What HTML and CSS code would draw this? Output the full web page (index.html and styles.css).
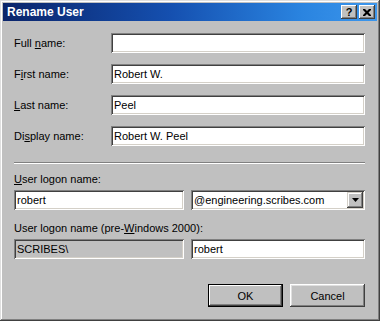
FILE: index.html
```html
<!DOCTYPE html>
<html lang="en">
<head>
  <meta charset="UTF-8" />
  <title>Rename User</title>
  <link rel="stylesheet" href="styles.css">
</head>
<body>

  <div class="window">
    <div class="titlebar">
      <span class="title">Rename User</span>
      <div class="caption-buttons">
        <div class="cap-btn help">?</div>
        <div class="cap-btn close">
          <svg width="8" height="7" viewBox="0 0 8 7">
            <path d="M0 0h2l2 2 2-2h2v1L5.5 3.5 8 6v1H6L4 5 2 7H0V6l2.5-2.5L0 1z" fill="#000"/>
          </svg>
        </div>
      </div>
    </div>

    <div class="body">
      <div class="fields">
        <label>Full <u>n</u>ame:</label>
        <div class="edit"></div>
        <label>F<u>i</u>rst name:</label>
        <div class="edit">Robert W.</div>
        <label><u>L</u>ast name:</label>
        <div class="edit">Peel</div>
        <label>Di<u>s</u>play name:</label>
        <div class="edit">Robert W. Peel</div>
      </div>

      <div class="separator"></div>

      <div class="caption first"><u>U</u>ser logon name:</div>
      <div class="pair">
        <div class="edit left">robert</div>
        <div class="edit combo">
          <span>@engineering.scribes.com</span>
          <div class="drop">
            <svg width="7" height="4" viewBox="0 0 7 4"><path d="M0 0h7L3.5 4z" fill="#000"/></svg>
          </div>
        </div>
      </div>

      <div class="caption second">User logon name (pre-<u>W</u>indows 2000):</div>
      <div class="pair">
        <div class="edit left disabled">SCRIBES\</div>
        <div class="edit right">robert</div>
      </div>

      <div class="buttons">
        <button class="btn default">OK</button>
        <button class="btn">Cancel</button>
      </div>
    </div>
  </div>

</body>
</html>
```

FILE: styles.css
```css
html, body {
  margin: 0;
  padding: 0;
  background: #c0c0c0;
  font-family: "Liberation Sans", Arial, sans-serif;
  font-size: 11px;
  color: #000;
}
.window {
  width: 380px;
  height: 321px;
  box-sizing: border-box;
  padding: 3px;
  background: #c0c0c0;
  box-shadow: inset -1px -1px #404040, inset 1px 1px #dfdfdf,
              inset -2px -2px #808080, inset 2px 2px #fff;
  display: flex;
  flex-direction: column;
}
.titlebar {
  height: 18px;
  display: flex;
  align-items: center;
  justify-content: space-between;
  padding: 0 2px 0 4px;
  background: linear-gradient(to right, #0a246a 0%, #1550b0 45%, #2a84e0 80%, #3c96ec 100%);
}
.title {
  color: #fff;
  font-weight: bold;
  font-size: 12px;
}
.caption-buttons {
  display: flex;
  gap: 2px;
}
.cap-btn {
  width: 16px;
  height: 14px;
  box-sizing: border-box;
  background: #c0c0c0;
  box-shadow: inset -1px -1px #404040, inset 1px 1px #fff,
              inset -2px -2px #808080;
  display: flex;
  align-items: center;
  justify-content: center;
}
.cap-btn.help {
  font-weight: bold;
  font-size: 11px;
  line-height: 14px;
}
.body {
  flex: 1;
  padding: 12px 12px 0 11px;
  display: flex;
  flex-direction: column;
}
.fields {
  display: grid;
  grid-template-columns: 97px 1fr;
  grid-auto-rows: 20px;
  row-gap: 11px;
  align-items: center;
}
.edit {
  height: 20px;
  box-sizing: border-box;
  background: #fff;
  padding: 0 3px;
  line-height: 20px;
  white-space: nowrap;
  box-shadow: inset 1px 1px #808080, inset -1px -1px #fff,
              inset 2px 2px #404040, inset -2px -2px #d4d0c8;
}
.separator {
  margin-top: 16px;
  height: 0;
  border-top: 1px solid #808080;
  border-bottom: 1px solid #fff;
}
.caption {
  line-height: 14px;
  margin-bottom: 4px;
}
.caption.first {
  margin-top: 8px;
}
.caption.second {
  margin-top: 11px;
}
.pair {
  display: flex;
  gap: 7px;
}
.pair .left {
  width: 170px;
}
.pair .combo,
.pair .right {
  flex: 1;
}
.combo {
  display: flex;
  align-items: center;
  justify-content: space-between;
  padding-right: 2px;
}
.drop {
  width: 16px;
  height: 16px;
  box-sizing: border-box;
  background: #c0c0c0;
  box-shadow: inset -1px -1px #404040, inset 1px 1px #d4d0c8,
              inset -2px -2px #808080, inset 2px 2px #fff;
  display: flex;
  align-items: center;
  justify-content: center;
}
.edit.disabled {
  background: #c0c0c0;
}
.buttons {
  margin-top: 25px;
  display: flex;
  justify-content: flex-end;
  gap: 7px;
}
.btn {
  width: 75px;
  height: 23px;
  margin: 0;
  padding: 0;
  border: none;
  background: #c0c0c0;
  font-family: "Liberation Sans", Arial, sans-serif;
  font-size: 11px;
  color: #000;
  box-shadow: inset -1px -1px #404040, inset 1px 1px #fff,
              inset -2px -2px #808080, inset 2px 2px #dfdfdf;
}
.btn.default {
  box-shadow: inset 0 0 0 1px #000, inset -2px -2px #404040, inset 2px 2px #fff,
              inset -3px -3px #808080;
}
```
